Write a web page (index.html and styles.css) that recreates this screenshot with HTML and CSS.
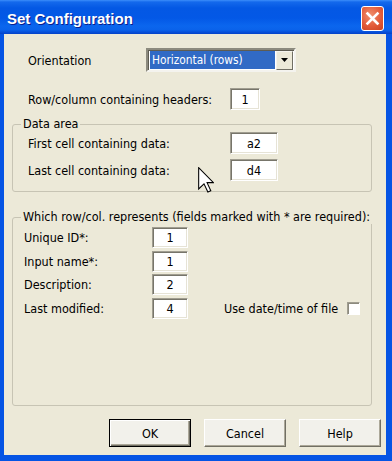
FILE: index.html
```html
<!DOCTYPE html>
<html lang="en">
<head>
    <meta charset="UTF-8">
    <title>Set Configuration</title>
    <link rel="stylesheet" href="styles.css">
</head>
<body>
<div class="window">
    <div class="titlebar">
        <span class="title">Set Configuration</span>
        <span class="close">
            <svg width="23" height="25" viewBox="0 0 23 25"><path d="M6.5 7.5 L16.5 17.5 M16.5 7.5 L6.5 17.5" stroke="#fff" stroke-width="2.6" stroke-linecap="square"/></svg>
        </span>
    </div>

    <div class="client">
        <div class="row orient">
            <span class="label">Orientation</span>
            <div class="combo">
                <span class="combo-value">Horizontal (rows)</span>
                <span class="combo-btn"><svg width="8" height="5" viewBox="0 0 8 5"><path d="M0 0 H7 L3.5 4 Z" fill="#000"/></svg></span>
            </div>
        </div>

        <div class="row headers">
            <span class="label">Row/column containing headers:</span>
            <input class="field w30" type="text" value="1" readonly>
        </div>

        <fieldset class="group data-area">
            <legend>Data area</legend>
            <div class="grid grid-data">
                <span class="label">First cell containing data:</span>
                <input class="field w48" type="text" value="a2" readonly>
                <span class="label">Last cell containing data:</span>
                <input class="field w48" type="text" value="d4" readonly>
            </div>
        </fieldset>

        <fieldset class="group fields">
            <legend>Which row/col. represents (fields marked with * are required):</legend>
            <div class="grid grid-fields">
                <span class="label">Unique ID*:</span>
                <input class="field w36" type="text" value="1" readonly>
                <span></span>
                <span class="label">Input name*:</span>
                <input class="field w36" type="text" value="1" readonly>
                <span></span>
                <span class="label">Description:</span>
                <input class="field w36" type="text" value="2" readonly>
                <span></span>
                <span class="label">Last modified:</span>
                <input class="field w36" type="text" value="4" readonly>
                <span class="filedate">Use date/time of file <span class="checkbox"></span></span>
            </div>
        </fieldset>

        <div class="buttons">
            <button class="btn default">OK</button>
            <button class="btn">Cancel</button>
            <button class="btn">Help</button>
        </div>
    </div>

    <svg class="cursor" width="16" height="26" viewBox="0 0 12 19.5"><path d="M0.5 0.5 L0.5 16.5 L4.5 12.6 L7.4 18.8 L9.6 17.8 L6.8 11.7 L11.6 11.7 Z" fill="#fff" stroke="#000" stroke-width="0.8" stroke-linejoin="miter"/></svg>
</div>
</body>
</html>
```

FILE: styles.css
```css
body { margin: 0; background: #fff; font-family: "DejaVu Sans Condensed", "DejaVu Sans", sans-serif; font-stretch: condensed; font-size: 12.5px; color: #000; }

.window { position: relative; width: 392px; height: 461px; display: flex; flex-direction: column; background: #0554E4; box-sizing: border-box; }

.titlebar { height: 34px; flex: none; display: flex; align-items: center; justify-content: space-between; padding: 0 8px 0 7px; background: linear-gradient(to bottom, #3C8EFA 0, #1469EC 2px, #0458E4 8px, #0358E6 18px, #0B66EE 26px, #0A62EA 30px, #0548D2 33px, #0443C6 34px); }
.title { color: #fff; font-family: "Liberation Sans", Arial, sans-serif; font-stretch: normal; font-weight: bold; font-size: 15px; text-shadow: 1px 1px 0 #0A1E8C; margin-top: 2px; }
.close { display: block; width: 23px; height: 25px; margin-top: 3px; box-sizing: border-box; border: 1px solid #fff; border-radius: 3px; background: radial-gradient(circle at 40% 35%, #F0906E 0, #E35B3A 55%, #CC4220 100%); }
.close svg { display: block; margin: -1px; }

.client { flex: 1; margin: 0 6px 6px 4px; background: #ECE9D8; display: flex; flex-direction: column; }

.row { display: flex; align-items: center; padding-left: 24px; }
.orient { margin-top: 14px; height: 24px; }
.orient .label { width: 118px; }
.headers { margin-top: 16px; height: 22px; }
.headers .label { width: 202px; }

.combo { width: 150px; height: 24px; box-sizing: border-box; display: flex; align-items: center; background: #fff; border: 2px solid; border-color: #8C8A7E #F4F3EE #F4F3EE #8C8A7E; box-shadow: inset 1px 1px 0 #5E5C52; padding: 2px 1px 2px 2px; }
.combo-value { flex: 1; height: 18px; line-height: 18px; background: #316AC5; color: #fff; padding-left: 2px; font-size: 11.8px; }
.combo-btn { width: 17px; height: 19px; margin-left: 1px; box-sizing: border-box; display: flex; align-items: center; justify-content: center; background: #ECE9D8; border: 1px solid; border-color: #F4F3EE #716F64 #716F64 #F4F3EE; }

.field { box-sizing: border-box; height: 22px; padding: 0; margin: 0; font: inherit; color: #000; text-align: center; background: #fff; border: 1px solid; border-color: #A09D90 #FFFFFF #FFFFFF #A09D90; box-shadow: inset 1px 1px 0 #77756A, inset -1px -1px 0 #E6E3D6; outline: none; }
.w30 { width: 30px; }
.w48 { width: 48px; }
.w36 { width: 36px; }

.group { margin: 0 0 0 8px; width: 360px; box-sizing: border-box; min-inline-size: 0; border: 1px solid #C7C4B4; border-radius: 3px; padding: 0 8px; }
.group legend { padding: 0 2px; line-height: 14px; white-space: nowrap; }
.data-area { margin-top: 7px; padding-top: 1px; padding-bottom: 10px; }
.fields { margin-top: 18px; padding-top: 3px; height: 196px; }

.grid { display: grid; align-items: center; }
.grid-data { grid-template-columns: 202px 48px; grid-auto-rows: 22px; row-gap: 5px; padding-left: 7px; }
.grid-fields { grid-template-columns: 128px 36px auto; grid-auto-rows: 21px; row-gap: 2.6px; padding-left: 3px; }
.grid-fields .field { height: 21px; }
.label { white-space: nowrap; }

.filedate { display: flex; align-items: center; margin-left: 36px; white-space: nowrap; }
.checkbox { display: inline-block; width: 13px; height: 13px; box-sizing: border-box; margin-left: 9px; background: #fff; border: 1px solid; border-color: #A09D90 #fff #fff #A09D90; box-shadow: inset 1px 1px 0 #8C8A7E; }

.buttons { display: flex; justify-content: flex-end; gap: 13px; margin-top: 13px; padding-right: 5px; }
.btn { width: 82px; height: 28px; box-sizing: border-box; font: inherit; color: #000; background: #F2F1EB; border: 1px solid; border-color: #FFFFFF #716F64 #716F64 #FFFFFF; box-shadow: inset -1px -1px 0 #ACA899; padding: 0; }
.btn.default { border: 1px solid #000; box-shadow: inset 1px 1px 0 #fff, inset -1px -1px 0 #716F64, inset -2px -2px 0 #ACA899; }

.cursor { position: absolute; left: 198px; top: 167px; }
```
